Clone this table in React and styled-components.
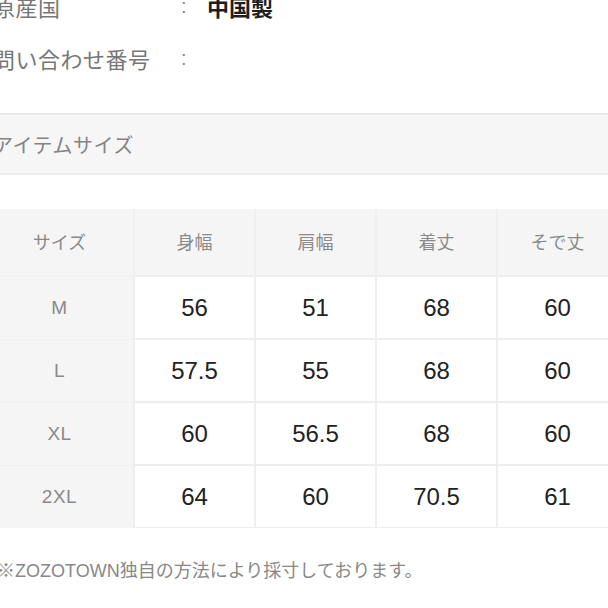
import React from "react";
import styled, { createGlobalStyle } from "styled-components";

const GlobalStyle = createGlobalStyle`
  html, body {
    margin: 0;
    padding: 0;
    background: #ffffff;
    overflow: hidden;
  }
  body {
    font-family: "Liberation Sans", "Noto Sans CJK JP", sans-serif;
  }
`;

const Page = styled.div`
  width: 660px;
  margin-left: -7px;
  margin-top: -20px;
`;

const InfoList = styled.dl`
  margin: 0;
`;

const InfoRow = styled.div`
  display: grid;
  grid-template-columns: 188px 26px 1fr;
  align-items: center;
  height: 52px;
`;

const InfoLabel = styled.dt`
  font-size: 22px;
  color: #777777;
  letter-spacing: 0.5px;
`;

const Colon = styled.span`
  font-size: 20px;
  color: #8a8a8a;
`;

const InfoValue = styled.dd`
  margin: 0;
  font-size: 22px;
  font-weight: 700;
  color: #1e1e1e;
`;

const SectionHead = styled.h2`
  margin: 29px 0 0;
  height: 58px;
  display: flex;
  align-items: center;
  background: #f6f6f6;
  border-top: 2px solid #e9e9e9;
  border-bottom: 2px solid #ececec;
  font-size: 20px;
  font-weight: 400;
  color: #848484;
  letter-spacing: 0.5px;
`;

const SizeTable = styled.table`
  margin: 34px 0 0 -7px;
  border-collapse: collapse;
  table-layout: fixed;
`;

const HeadCell = styled.th`
  width: ${(p) => (p.$first ? "147px" : "119px")};
  height: 64px;
  padding: 0 0 2px;
  background: #f5f5f5;
  border-right: 2px solid #efefef;
  font-size: 18px;
  font-weight: 400;
  color: #8a8a8a;
  text-align: center;
`;

const SizeCell = styled.th`
  height: 61px;
  padding: 0;
  background: #f5f5f5;
  border-top: 1px solid #f0f0f0;
  font-size: 19px;
  font-weight: 400;
  color: #8a8a8a;
  text-align: center;
  letter-spacing: 0.5px;
`;

const ValueCell = styled.td`
  height: 61px;
  padding: 0;
  background: #ffffff;
  border: 2px solid #eeeeee;
  border-bottom-width: 1px;
  font-size: 24px;
  color: #222222;
  text-align: center;
`;

const Note = styled.p`
  margin: 28px 0 0 4px;
  font-size: 18px;
  color: #888888;
`;

const headers = ["サイズ", "身幅", "肩幅", "着丈", "そで丈"];

const rows = [
  ["M", "56", "51", "68", "60"],
  ["L", "57.5", "55", "68", "60"],
  ["XL", "60", "56.5", "68", "60"],
  ["2XL", "64", "60", "70.5", "61"],
];

const App = () => {
  return (
    <Page>
      <GlobalStyle />
      <InfoList>
        <InfoRow>
          <InfoLabel>原産国</InfoLabel>
          <Colon>:</Colon>
          <InfoValue>中国製</InfoValue>
        </InfoRow>
        <InfoRow>
          <InfoLabel>問い合わせ番号</InfoLabel>
          <Colon>:</Colon>
          <InfoValue />
        </InfoRow>
      </InfoList>

      <SectionHead>アイテムサイズ</SectionHead>

      <SizeTable>
        <thead>
          <tr>
            {headers.map((h, i) => (
              <HeadCell key={h} $first={i === 0}>
                {h}
              </HeadCell>
            ))}
          </tr>
        </thead>
        <tbody>
          {rows.map(([size, ...vals]) => (
            <tr key={size}>
              <SizeCell>{size}</SizeCell>
              {vals.map((v, i) => (
                <ValueCell key={i}>{v}</ValueCell>
              ))}
            </tr>
          ))}
        </tbody>
      </SizeTable>

      <Note>※ZOZOTOWN独自の方法により採寸しております。</Note>
    </Page>
  );
};

export default App;
